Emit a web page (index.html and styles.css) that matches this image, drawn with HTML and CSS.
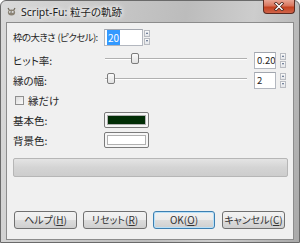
FILE: index.html
```html
<!DOCTYPE html>
<html lang="ja">
<head>
    <meta charset="UTF-8">
    <title>Script-Fu: 粒子の軌跡</title>
    <link rel="stylesheet" href="styles.css">
</head>
<body>
    <div class="window">
        <!-- タイトルバー -->
        <div class="titlebar">
            <svg class="app-icon" width="9" height="9" viewBox="0 0 9 9">
                <path d="M1 1 L2.5 3.5 M8 1 L6.5 3.5" stroke="#6b6456" stroke-width="1.2"/>
                <ellipse cx="4.5" cy="5.6" rx="3.6" ry="3" fill="#8a8274"/>
                <circle cx="3.2" cy="5" r="1.1" fill="#fff"/>
                <circle cx="5.9" cy="5" r="1.1" fill="#fff"/>
                <circle cx="3.4" cy="5.1" r="0.5" fill="#222"/>
                <circle cx="6.1" cy="5.1" r="0.5" fill="#222"/>
            </svg>
            <span class="title">Script-Fu: 粒子の軌跡</span>
            <div class="close">
                <svg width="12" height="9" viewBox="0 0 12 9">
                    <path d="M3 1.5 L9 7.5 M9 1.5 L3 7.5" stroke="#4a2018" stroke-width="3" stroke-linecap="square"/>
                    <path d="M3 1.5 L9 7.5 M9 1.5 L3 7.5" stroke="#fff" stroke-width="1.5" stroke-linecap="square"/>
                </svg>
            </div>
        </div>

        <div class="client">
            <div class="form">
                <div class="row first">
                    <span class="label narrow">枠の大きさ (ピクセル):</span>
                    <div class="spin">
                        <div class="field wide"><span class="sel">20</span></div>
                        <div class="arrows near"><span class="up"></span><span class="down"></span></div>
                    </div>
                </div>

                <div class="row">
                    <span class="label">ヒット率:</span>
                    <div class="ctrl">
                        <div class="slider">
                            <div class="track"></div>
                            <div class="thumb" style="left: 27px;"></div>
                        </div>
                        <div class="spin">
                            <div class="field">0.20</div>
                            <div class="arrows"><span class="up"></span><span class="down"></span></div>
                        </div>
                    </div>
                </div>

                <div class="row">
                    <span class="label">縁の幅:</span>
                    <div class="ctrl">
                        <div class="slider">
                            <div class="track"></div>
                            <div class="thumb" style="left: 3px;"></div>
                        </div>
                        <div class="spin">
                            <div class="field">2</div>
                            <div class="arrows"><span class="up"></span><span class="down"></span></div>
                        </div>
                    </div>
                </div>

                <div class="row check-row">
                    <span class="checkbox"></span>
                    <span class="check-label">縁だけ</span>
                </div>

                <div class="row">
                    <span class="label">基本色:</span>
                    <div class="color"><div class="swatch" style="background: #012d05;"></div></div>
                </div>

                <div class="row">
                    <span class="label">背景色:</span>
                    <div class="color"><div class="swatch" style="background: #ffffff;"></div></div>
                </div>
            </div>

            <div class="progress"></div>

            <div class="buttons">
                <button class="btn help">ヘルプ(<u>H</u>)</button>
                <button class="btn reset">リセット(<u>R</u>)</button>
                <button class="btn ok">OK(<u>O</u>)</button>
                <button class="btn cancel">キャンセル(<u>C</u>)</button>
            </div>
        </div>
    </div>
</body>
</html>
```

FILE: styles.css
```css
body { margin: 0; font-family: "Noto Sans CJK JP", sans-serif; font-feature-settings: "palt"; }
.window { position: relative; width: 300px; height: 243px; box-sizing: border-box; display: flex; flex-direction: column; padding: 0 5px 2px; border: 1px solid #6a6a6a; border-radius: 6px 6px 0 0; background: linear-gradient(100deg, #dadada 0%, #c8c8c8 30%, #bcbcbc 55%, #cdcdcd 75%, #a9a9a9 100%); }

/* タイトルバー */
.titlebar { height: 21px; display: flex; align-items: center; }
.app-icon { margin-left: 1px; margin-right: 5px; }
.title { font-family: "Noto Sans", "Noto Sans CJK JP", sans-serif; font-size: 10.5px; color: #1c1c1c; text-shadow: 0 0 4px #fff, 0 0 6px #fff; }
.close { position: absolute; top: -1px; right: 4px; width: 32px; height: 14px; box-sizing: border-box; display: flex; align-items: center; justify-content: center; border: 1px solid #5b2a20; border-top: none; border-radius: 0 0 4px 4px; background: linear-gradient(#e9a694 0%, #d8745c 45%, #c4411f 55%, #d0644a 100%); }

/* クライアント領域 */
.client { flex: 1; display: flex; flex-direction: column; background: #f0f0f0; border: 1px solid #8c8c8c; padding: 4px 5px 10px 6px; color: #262626; font-size: 10.5px; }
.form { display: flex; flex-direction: column; }
.row { height: 20px; display: grid; grid-template-columns: 91px 1fr; align-items: center; }
.row.first { margin-bottom: 3px; }
.label { white-space: nowrap; }
.label.narrow { font-size: 9.5px; letter-spacing: -0.6px; word-spacing: 1px; }
.ctrl { display: flex; align-items: center; padding-right: 2px; }

/* スピンボタン */
.spin { display: flex; align-items: center; }
.field { width: 22px; height: 17px; box-sizing: border-box; border: 1px solid #b3b7bf; border-top-color: #a2a6ae; background: #fff; padding-left: 2px; line-height: 15px; font-size: 9.5px; white-space: nowrap; overflow: hidden; }
.field.wide { width: 39px; padding-left: 2px; font-size: 10px; }
.sel { background: #3399ff; color: #fff; padding: 0 1px; }
.arrows { display: flex; flex-direction: column; gap: 1px; margin-left: 4px; }
.arrows.near { margin-left: 1px; }
.arrows span { width: 6px; height: 7px; box-sizing: border-box; border: 1px solid #b9bcc2; background: linear-gradient(#fafafa, #e4e6ea); display: flex; align-items: center; justify-content: center; }
.arrows .up::after { content: ""; border: 1.5px solid transparent; border-bottom: 2px solid #4d5f80; border-top: none; }
.arrows .down::after { content: ""; border: 1.5px solid transparent; border-top: 2px solid #4d5f80; border-bottom: none; }

/* スライダー */
.slider { position: relative; flex: 1; height: 11px; margin-right: 7px; margin-top: -4px; }
.track { margin: 5px 0 0 1px; height: 1px; background: #b0b0b0; border-bottom: 1px solid #fff; }
.thumb { position: absolute; top: 0; width: 8px; height: 11px; box-sizing: border-box; border: 1px solid #7c7c7c; border-radius: 2px; background: linear-gradient(#fbfbfb, #e1e1e1); }

/* チェックボックス */
.check-row { display: flex; }
.checkbox { width: 9px; height: 9px; box-sizing: border-box; margin-left: 2px; border: 1px solid #8f8f8f; background: linear-gradient(135deg, #dcdcdc, #fbfbfb); }
.check-label { margin-left: 4px; }

/* 色ボタン */
.color { width: 45px; height: 16px; box-sizing: border-box; border: 1px solid #7a7a7a; border-radius: 2px; padding: 2px; background: #f6f6f6; }
.swatch { height: 100%; box-sizing: border-box; border: 1px solid #b0b0b0; }

/* プログレスバー */
.progress { margin-top: 8px; height: 19px; box-sizing: border-box; border: 1px solid #b6b6b6; border-radius: 2px; background: linear-gradient(#e4e4e4, #d4d4d4 50%, #cdcdcd); }

/* ボタン */
.buttons { margin-top: auto; display: flex; padding-left: 1px; }
.btn { height: 18px; padding: 0; box-sizing: border-box; border: 1px solid #707070; border-radius: 3px; font-family: "Noto Sans CJK JP", sans-serif; font-feature-settings: "palt"; font-size: 10px; color: #333; line-height: 14px; background: linear-gradient(#f2f2f2 0%, #ebebeb 50%, #dddddd 50%, #cfcfcf 100%); }
.help { width: 63px; }
.reset { width: 64px; margin-left: 6px; }
.ok { width: 62px; margin-left: 6px; border-color: #3c7fb1; box-shadow: inset 0 0 0 1px #b8e0f8; }
.cancel { width: 63px; margin-left: 7px; }
```
